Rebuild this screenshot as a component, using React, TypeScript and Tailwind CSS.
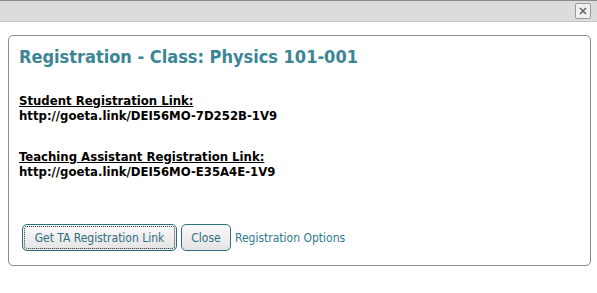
import React from "react";

export default function App() {
  const font = { fontFamily: '"DejaVu Sans Condensed", "DejaVu Sans", sans-serif' };
  return (
    <div className="w-[597px] h-[293px] bg-white relative overflow-hidden" style={font}>
      <div className="h-[22px] bg-[#dcdcdc] border-t border-t-[#8a8a8a] border-b border-b-[#c4c4c4] flex justify-end items-center pr-[6px]">
        <button className="w-[16px] h-[16px] border border-[#9a9a9a] rounded-[2px] bg-[#f0f0f0] flex items-center justify-center">
          <svg width="8" height="8" viewBox="0 0 8 8">
            <path d="M1 1 L7 7 M7 1 L1 7" stroke="#666" strokeWidth="1.6" />
          </svg>
        </button>
      </div>
      <div className="mt-[13px] ml-[8px] w-[583px] h-[231px] border border-[#8c8c8c] rounded-[5px] px-[10px] pt-[10px]">
        <h1 className="text-[18px] font-bold text-[#3b8595] leading-[22px]">
          Registration - Class: Physics 101-001
        </h1>
        <div className="mt-[25px] text-[13px] font-bold text-black leading-[15px]">
          <div className="underline">Student Registration Link:</div>
          <div>http://goeta.link/DEI56MO-7D252B-1V9</div>
        </div>
        <div className="mt-[26px] text-[13px] font-bold text-black leading-[15px]">
          <div className="underline">Teaching Assistant Registration Link:</div>
          <div>http://goeta.link/DEI56MO-E35A4E-1V9</div>
        </div>
        <div className="mt-[45px] flex items-center gap-[4px] pl-[3px]">
          <button className="h-[27px] w-[155px] rounded-[5px] border border-[#2e6e80] bg-gradient-to-b from-[#fafafa] to-[#e4e4e4] text-[#2e6e80] text-[12px] outline outline-1 outline-dotted outline-[#333] outline-offset-[-3px]">
            Get TA Registration Link
          </button>
          <button className="h-[27px] w-[50px] rounded-[5px] border border-[#2e6e80] bg-gradient-to-b from-[#fafafa] to-[#e4e4e4] text-[#2e6e80] text-[12px]">
            Close
          </button>
          <span className="text-[12px] text-[#2e7a8c]">Registration Options</span>
        </div>
      </div>
    </div>
  );
}
